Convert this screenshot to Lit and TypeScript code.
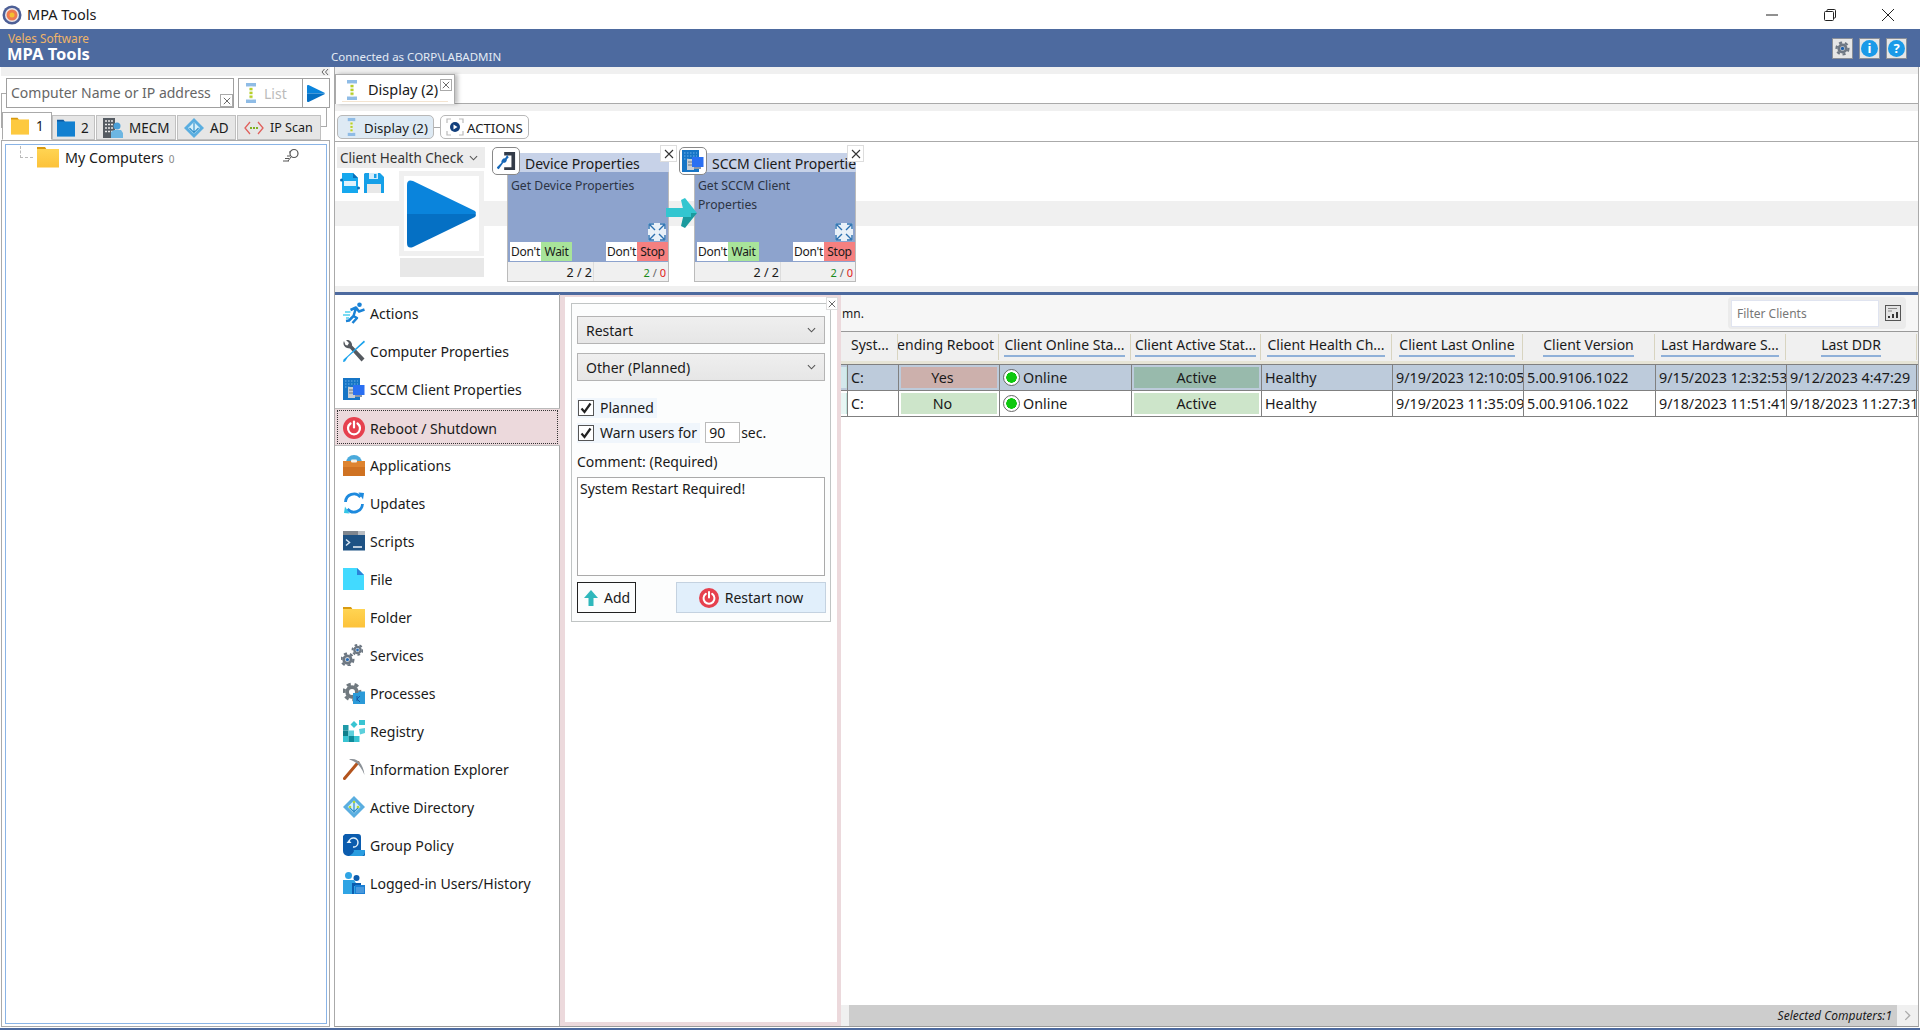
import { LitElement, html, svg, css } from 'lit';
import { customElement } from 'lit/decorators.js';

const gear = (cx: number, cy: number, r: number, fill: string, dot: string) => svg`
  <circle cx=${cx} cy=${cy} r=${r * 1.05} fill="none" stroke=${fill} stroke-width=${r * 0.4} stroke-dasharray=${`${r * 0.55} ${r * 0.5}`} />
  <circle cx=${cx} cy=${cy} r=${r * 0.65} fill="none" stroke=${fill} stroke-width=${r * 0.5} />
  <circle cx=${cx} cy=${cy} r=${r * 0.3} fill=${dot} />`;

const folderIcon = (tab: string, top: string, bottom: string, id: string) => html`<svg viewBox="0 0 22 22" class="ic22">
  <defs><linearGradient id=${id} x1="0" y1="0" x2="0" y2="1"><stop offset="0" stop-color=${top} /><stop offset="1" stop-color=${bottom} /></linearGradient></defs>
  <path d="M0 1h8l2 3h-10z" fill=${tab} />
  <rect x="0" y="3" width="22" height="18.500" fill=${`url(#${id})`} />
</svg>`;

const displayIcon = html`<svg viewBox="0 0 12 20" width="12" height="20" preserveAspectRatio="none">
  <rect x="1" y="0" width="10" height="3.500" fill="#8fbce6" />
  <rect x="1" y="16.500" width="10" height="3.500" fill="#8fbce6" />
  <rect x="4.500" y="3.500" width="3" height="13" fill="#eef3e0" />
  <rect x="4.500" y="5" width="3" height="2.200" fill="#b8d028" />
  <rect x="4.500" y="8.800" width="3" height="2.200" fill="#b8d028" />
  <rect x="4.500" y="12.600" width="3" height="2.200" fill="#b8d028" />
</svg>`;

const powerIcon = (s: number) => html`<svg viewBox="0 0 22 22" width=${s} height=${s}>
  <circle cx="11" cy="11" r="11" fill="#e6404e" />
  <path d="M7.500 6.500a6 6 0 1 0 7 0" fill="none" stroke="#fff" stroke-width="2.200" stroke-linecap="round" />
  <path d="M11 4.500v6" stroke="#fff" stroke-width="2.200" stroke-linecap="round" />
</svg>`;

const playTriangle = (w: number, h: number) => html`<svg viewBox="0 0 70 70" width=${w} height=${h}>
  <path d="M0 6Q0 0 6 2L68 32Q70 35 68 35H0z" fill="#0a84dc" />
  <path d="M0 35H68Q70 35 68 38L6 68Q0 70 0 64z" fill="#0570c4" />
</svg>`;

const adIcon = html`<svg viewBox="0 0 22 22" class="ic22">
  <path d="M11 0L22 11L11 22L0 11z" fill="#5aaee0" />
  <path d="M11 4.500L17.500 11L11 17.500L4.500 11z" fill="#d6f0fa" />
  <path d="M11 5v12M6 11l5 5 5-5" stroke="#2c8cc8" stroke-width="1.200" fill="none" />
  <circle cx="11" cy="6" r="1.300" fill="#b4d83a" /><circle cx="7" cy="11" r="1.300" fill="#b4d83a" /><circle cx="15" cy="11" r="1.300" fill="#b4d83a" />
</svg>`;

const sccmIcon = html`<svg viewBox="0 0 22 22" class="ic22">
  <rect x="0" y="0" width="17" height="22" fill="#1675c6" />
  <path d="M2 3h13M2 6h13M2 9h5" stroke="#6fb2e8" stroke-width="1.200" stroke-dasharray="1.500 1.500" />
  <rect x="5" y="9" width="7" height="11" fill="#c9ced4" />
  <path d="M6 12h5M6 15h5" stroke="#6d7680" stroke-width="1" />
  <rect x="10" y="7" width="11.500" height="10" fill="#2a6ff2" />
  <rect x="12" y="17" width="7" height="2" fill="#8a96a8" />
</svg>`;

const navIcons: Record<string, unknown> = {
  actions: html`<svg viewBox="0 0 22 22" class="ic22">
    <circle cx="16.500" cy="2.800" r="2.300" fill="#1a82d6" />
    <path d="M7.500 8L13 5.500L16 9.500L21.500 7.500M13 6L10.500 14L14 16L9.500 21M10.500 14L6 18.500L3 19" stroke="#1a82d6" stroke-width="2.500" fill="none" stroke-linejoin="round" />
    <path d="M2 10h5.500M0 13h7M3 16h3" stroke="#4fd0ee" stroke-width="1.300" />
  </svg>`,
  tools: html`<svg viewBox="0 0 22 22" class="ic22">
    <path d="M1 1a5 5 0 0 0 3 7l3 .5L18.500 21.500l3-3L9 5.500A5 5 0 0 0 3 0l3 3-1.500 2.500L2.500 5z" fill="#55595f" />
    <path d="M21 .5L22 2 5 17l-3 4.500-2 .5.500-2.500L4.500 16z" fill="#1ca3ec" />
  </svg>`,
  sccm: sccmIcon,
  power: powerIcon(22),
  apps: html`<svg viewBox="0 0 22 22" class="ic22">
    <path d="M3 9a8 8 0 0 1 16 0z" fill="#4aaadc" />
    <rect x="0" y="7" width="22" height="15" fill="#de8430" />
    <rect x="0" y="13" width="22" height="9" fill="#cf7222" />
    <rect x="8" y="5.500" width="6" height="3" rx="1" fill="#f7f2e8" />
  </svg>`,
  updates: html`<svg viewBox="0 0 22 22" class="ic22" fill="none">
    <path d="M2.500 10a8.500 8.500 0 0 1 15-5" stroke="#1d8ade" stroke-width="2.800" />
    <path d="M15.500 .5l5.500.5-1 6.500z" fill="#1d8ade" />
    <path d="M19.500 12a8.500 8.500 0 0 1-15 5" stroke="#1d8ade" stroke-width="2.800" />
    <path d="M6.500 21.500L1 21l1-6.500z" fill="#34c6e6" />
  </svg>`,
  scripts: html`<svg viewBox="0 0 22 22" class="ic22">
    <rect y="1" width="22" height="19.500" fill="#1e5284" />
    <rect y="1" width="22" height="4" fill="#80868e" />
    <rect x="15" y="1" width="7" height="4" fill="#b9bdc2" />
    <path d="M3 9.500l3.500 3-3.500 3" stroke="#d8e6f2" stroke-width="1.500" fill="none" />
    <path d="M10 17h9" stroke="#f2f5f8" stroke-width="1.500" />
  </svg>`,
  file: html`<svg viewBox="0 0 22 22" class="ic22">
    <path d="M0 0h14l7 7v15H0z" fill="#42daff" />
    <path d="M14 0l7 7h-7z" fill="#2b84d8" />
  </svg>`,
  folder: folderIcon('#d89a10', '#ffd452', '#fcc23a', 'fnav'),
  services: html`<svg viewBox="0 0 24 24" class="ic22 shift">
    ${gear(7, 17, 6.200, '#6d7782', '#2b6cb4')}${gear(18, 6.500, 5.200, '#6d7782', '#2b6cb4')}
  </svg>`,
  processes: html`<svg viewBox="0 0 22 22" class="ic22">
    ${gear(9, 10, 7.500, '#70797f', '#fff')}
    <path d="M10 11h5l1-1.500h6V22H10z" fill="#2b9ad8" />
    <path d="M14 14v5M17 14l-3 3 3 3" stroke="#1658a6" stroke-width="1" fill="none" />
  </svg>`,
  registry: html`<svg viewBox="0 0 22 22" class="ic22">
    <rect y="5" width="5.500" height="5.500" fill="#1f9aa8" />
    <rect y="10.500" width="5.500" height="5.500" fill="#0f7f8c" />
    <rect x="5.500" y="10.500" width="5.500" height="5.500" fill="#5cd0dc" />
    <rect y="16" width="5.500" height="6" fill="#38c4d2" />
    <rect x="5.500" y="16" width="5.500" height="6" fill="#0e8a9a" />
    <rect x="11" y="16" width="5.500" height="6" fill="#38c4d2" />
    <path d="M11 1l3.500 3.500L11 8 7.500 4.500z" fill="#38c4d2" />
    <rect x="16" y="0" width="6" height="5" fill="#38c4d2" />
    <path d="M16 9l6-1 0 5-5 1.500z" fill="#5cd0dc" />
  </svg>`,
  pick: html`<svg viewBox="0 0 22 22" class="ic22" fill="none">
    <path d="M1.500 20.500L15 4.500" stroke="#b3541e" stroke-width="3" stroke-linecap="round" />
    <path d="M6 1.500C13 -.5 20 4 21.500 17C18 8 13 3 6 1.500z" fill="#8c9298" />
  </svg>`,
  ad: adIcon,
  gp: html`<svg viewBox="0 0 22 22" class="ic22">
    <path d="M2 0h13a3 3 0 0 1 3 3v14h4a3 3 0 0 1-3 5H5a5 5 0 0 1-5-5V2z" fill="#0b5cae" />
    <path d="M9 20c3-3 2-4 1-4h12c0 3-1 6-3 6H6z" fill="#2a9de0" />
    <path d="M6 8a4.500 4.500 0 1 1 4 5" stroke="#e8f4fc" stroke-width="1.500" fill="none" />
    <path d="M3.500 9l2.500-3 2.500 3z" fill="#e8f4fc" />
  </svg>`,
  users: html`<svg viewBox="0 0 22 22" class="ic22">
    <circle cx="5.500" cy="3.500" r="3.500" fill="#2fa4e4" />
    <path d="M0 8h11l2 3v11H0z" fill="#2fa4e4" />
    <circle cx="13.500" cy="6" r="3" fill="#0b5cae" />
    <path d="M9 11h9v3h-7v8H9z" fill="#0b5cae" />
    <rect x="12" y="13" width="10" height="9" fill="#1b7fd4" />
    <path d="M13.500 16h7M13.500 18h7M13.500 20h7" stroke="#cfe6f8" stroke-width="1" stroke-dasharray="1 1" />
  </svg>`,
};

const navItems = [
  ['actions', 'Actions'],
  ['tools', 'Computer Properties'],
  ['sccm', 'SCCM Client Properties'],
  ['power', 'Reboot / Shutdown'],
  ['apps', 'Applications'],
  ['updates', 'Updates'],
  ['scripts', 'Scripts'],
  ['file', 'File'],
  ['folder', 'Folder'],
  ['services', 'Services'],
  ['processes', 'Processes'],
  ['registry', 'Registry'],
  ['pick', 'Information Explorer'],
  ['ad', 'Active Directory'],
  ['gp', 'Group Policy'],
  ['users', 'Logged-in Users/History'],
];

const columns = [
  { label: 'Syst...', w: 51, align: 'al-left', plain: true },
  { label: 'Pending Reboot', w: 101, align: 'al-right', plain: true },
  { label: 'Client Online Sta...', w: 132 },
  { label: 'Client Active Stat...', w: 130 },
  { label: 'Client Health Ch...', w: 131 },
  { label: 'Client Last Online', w: 131 },
  { label: 'Client Version', w: 132 },
  { label: 'Last Hardware S...', w: 131 },
  { label: 'Last DDR', w: 131 },
];

const rows = [
  { pending: 'Yes', last: '9/19/2023 12:10:05', hw: '9/15/2023 12:32:53', ddr: '9/12/2023 4:47:29', selected: true },
  { pending: 'No', last: '9/19/2023 11:35:09', hw: '9/18/2023 11:51:41', ddr: '9/18/2023 11:27:31', selected: false },
];

const chevron = html`<svg viewBox="0 0 10 6" width="9" height="6" fill="none"><path d="M1 1l4 4 4-4" stroke="#555" stroke-width="1.200" /></svg>`;
const closeX = html`<svg viewBox="0 0 10 10" width="8" height="8" fill="none"><path d="M1 1l8 8M9 1l-8 8" stroke="#444" stroke-width="1" /></svg>`;
const checkMark = html`<span class="check"><svg viewBox="0 0 14 14" width="14" height="14" fill="none"><path d="M2.500 7.500l3 3.500 6-8.500" stroke="#222" stroke-width="2.200" /></svg></span>`;

@customElement('app-root')
export class AppRoot extends LitElement {
  render() {
    return html`
      <div class="titlebar">
        <svg viewBox="0 0 20 20" width="20" height="20">
          <circle cx="10" cy="10" r="9.500" fill="#4d5f96" />
          <circle cx="10" cy="10" r="7" fill="#e8e4e8" />
          <circle cx="10" cy="10" r="5.500" fill="#ef7a50" />
          <circle cx="10" cy="10" r="2.500" fill="#f5c030" />
        </svg>
        <span class="app-title">MPA Tools</span>
        <div class="winbtns">
          <span class="winbtn"><svg viewBox="0 0 12 12" width="12" height="12"><path d="M0 6h12" stroke="#222" stroke-width="1" /></svg></span>
          <span class="winbtn"><svg viewBox="0 0 12 12" width="12" height="12" fill="none"><rect x=".5" y="2.500" width="9" height="9" rx="1" stroke="#222" /><path d="M3 2.500V1.500a1 1 0 0 1 1-1h6.500a1 1 0 0 1 1 1V8a1 1 0 0 1-1 1h-1" stroke="#222" /></svg></span>
          <span class="winbtn"><svg viewBox="0 0 12 12" width="12" height="12"><path d="M0 0l12 12M12 0l-12 12" stroke="#222" stroke-width="1" /></svg></span>
        </div>
      </div>

      <header class="header">
        <div class="brand">
          <div class="veles">Veles Software</div>
          <div class="brand-name">MPA Tools</div>
        </div>
        <div class="connected">Connected as CORP\\LABADMIN</div>
        <div class="head-btns">
          <span class="head-btn"><svg viewBox="0 0 18 18" width="17" height="17">${gear(9, 9, 6, '#6f7884', '#1f5fa8')}</svg></span>
          <span class="head-btn"><span class="round-i">i</span></span>
          <span class="head-btn"><span class="round-i">?</span></span>
        </div>
      </header>

      <div class="main">
        <aside class="left">
          <div class="strip-left">
            <svg viewBox="0 0 8 8" width="8" height="8" fill="none"><path d="M3.500 1L1 4l2.500 3M7 1L4.500 4 7 7" stroke="#666" stroke-width="1" /></svg>
          </div>
          <div class="search-row">
            <div class="search-input">
              <span class="placeholder">Computer Name or IP address</span>
              <span class="mini-x">${closeX}</span>
            </div>
            <div class="list-box">
              <span class="list-ic">${displayIcon}</span><span class="list-text">List</span>
            </div>
            <div class="go-box">${playTriangle(18, 19)}</div>
          </div>
          <div class="tabs">
            <div class="tab active">
              <svg viewBox="0 0 22 22" width="18" height="18"><path d="M0 1h8l2 3h-10z" fill="#d89a10" /><rect y="3" width="22" height="18.500" fill="#fdc93f" /></svg>
              <span>1</span>
            </div>
            <div class="tab t2">
              <svg viewBox="0 0 22 22" width="18" height="18"><path d="M0 1h8l2 3h-10z" fill="#0f5aa0" /><rect y="3" width="22" height="18.500" fill="#1280d0" /></svg>
              <span>2</span>
            </div>
            <div class="tab t3">
              <svg viewBox="0 0 20 20" width="20" height="20">
                <rect width="12" height="20" fill="#555b62" />
                <path d="M2 3h8M2 6.500h8M2 10h8M2 13.500h8" stroke="#e8e8e8" stroke-width="1.500" stroke-dasharray="2 1" />
                <circle cx="14" cy="8" r="3.500" fill="#4a9fd8" />
                <path d="M8 20v-6l3-2h7l2 3v5z" fill="#6cb6e2" />
              </svg>
              <span>MECM</span>
            </div>
            <div class="tab t4"><svg viewBox="0 0 22 22" width="20" height="20">
              <path d="M11 0L22 11L11 22L0 11z" fill="#5aaee0" />
              <path d="M11 4.500L17.500 11L11 17.500L4.500 11z" fill="#d6f0fa" />
              <path d="M11 5v12M6 11l5 5 5-5" stroke="#2c8cc8" stroke-width="1.200" fill="none" />
            </svg><span>AD</span></div>
            <div class="tab t5">
              <svg viewBox="0 0 20 14" width="20" height="14" fill="none">
                <path d="M6 1L1 7l5 6M14 1l5 6-5 6" stroke="#e0605c" stroke-width="1.300" />
                <path d="M6 7h8" stroke="#80b020" stroke-width="2" stroke-dasharray="2 1" />
              </svg>
              <span class="ip">IP Scan</span>
            </div>
          </div>
          <div class="tree-wrap">
            <div class="tree">
              <div class="tree-row">
                <span class="tree-dash"></span>
                ${folderIcon('#d89a10', '#ffd452', '#fcc23a', 'ftree')}
                <span class="tree-label">My Computers</span>
                <span class="tree-count">0</span>
                <svg class="tree-find" viewBox="0 0 18 14" width="18" height="14" fill="none">
                  <circle cx="12" cy="5.500" r="4" stroke="#555" stroke-width="1.200" />
                  <path d="M9 9l-3 4M1 13h6M3 10.500h4M5 8h3M7 4h1" stroke="#555" stroke-width="1" />
                </svg>
              </div>
            </div>
          </div>
        </aside>

        <section class="right">
          <div class="strip s7"></div>
          <div class="tabrow">
            <div class="doc-tab">
              ${displayIcon}
              <span class="doc-label">Display (2)</span>
              <span class="doc-x">${closeX}</span>
            </div>
          </div>
          <div class="strip s7"></div>
          <div class="subtabs">
            <div class="pill on">${displayIcon}<span>Display (2)</span></div>
            <div class="pill act">
              <svg viewBox="0 0 18 18" width="18" height="18" fill="none">
                <path d="M1 5V1h4M13 1h4v4M17 13v4h-4M5 17H1v-4" stroke="#bbb" stroke-width="1.200" />
                <circle cx="9" cy="9" r="5" fill="#123f7c" />
                <path d="M7.500 6.500v5l4-2.500z" fill="#fff" />
              </svg>
              <span>ACTIONS</span>
            </div>
          </div>

          <div class="workflow">
            <div class="band"></div>
            <div class="wf-left">
              <div class="combo"><span>Client Health Check</span>${chevron}</div>
              <div class="wf-tools">
                <div class="wf-icons">
                  <svg viewBox="0 0 20 20" width="20" height="20">
                    <path d="M2 0h11l5 5v15H2z" fill="#16a8ee" />
                    <path d="M13 0l5 5h-5z" fill="#0a70b8" />
                    <rect x="4" y="8" width="12" height="5" fill="#dff2fc" />
                    <circle cx="1.500" cy="7" r="1.500" fill="#0a70b8" /><circle cx="18.500" cy="15" r="1.500" fill="#0a70b8" />
                  </svg>
                  <svg viewBox="0 0 20 20" width="20" height="20">
                    <path d="M1 0h15l4 4v16H0V1z" fill="#16a0e8" />
                    <rect x="5" y="0" width="9" height="6" fill="#d4ecfa" />
                    <rect x="10" y="1" width="2.500" height="4" fill="#16a0e8" />
                    <rect x="3" y="11" width="14" height="9" fill="#e8e8e8" />
                  </svg>
                </div>
                <div class="play-col">
                  <div class="play-out"><div class="play-in">${playTriangle(70, 70)}</div></div>
                  <div class="play-bar"></div>
                </div>
              </div>
            </div>

            ${this.card('Device Properties', ['Get Device Properties'], html`<svg viewBox="0 0 22 22" width="20" height="20">
              <path d="M9 1h12v20H9v-3h8V5H9z" fill="#333b48" />
              <path d="M14 2l-1.500 3 1.500 2-2 2a4 4 0 0 1-4 4L3 20a2 2 0 0 1-2-2l5-5a4 4 0 0 1 4-5z" fill="#1768b8" />
            </svg>`)}
            <div class="wf-arrow">
              <svg viewBox="0 0 31 30" width="31" height="30">
                <path d="M15 2l4-2 12 15H18z" fill="#32c6d0" />
                <path d="M15 28l4 2 12-15H18z" fill="#1a9a9e" />
                <rect x="0" y="10" width="25" height="9" fill="#32c6d0" />
              </svg>
            </div>
            ${this.card('SCCM Client Properties', ['Get SCCM Client', 'Properties'], sccmIcon)}
          </div>

          <div class="strip s5"></div>
          <div class="blue-line"></div>

          <div class="lower">
            <nav class="nav">
              ${navItems.map(([icon, label]) => html`
                <div class="nav-item ${label === 'Reboot / Shutdown' ? 'current' : ''}">
                  ${navIcons[icon]}<span>${label}</span>
                </div>`)}
            </nav>

            <div class="form-outer">
              <span class="form-x">${closeX}</span>
              <div class="form">
                <div class="select"><span>Restart</span>${chevron}</div>
                <div class="select"><span>Other (Planned)</span>${chevron}</div>
                <div class="check-row first"><span class="check-lab">${checkMark}<span>Planned</span></span></div>
                <div class="check-row">
                  <span class="check-lab">${checkMark}<span>Warn users for</span></span>
                  <span class="num">90</span><span class="sec">sec.</span>
                </div>
                <div class="comment-label">Comment: (Required)</div>
                <div class="textarea">System Restart Required!</div>
                <div class="form-actions">
                  <div class="btn-add">
                    <svg viewBox="0 0 16 16" width="16" height="16"><path d="M8 0l7 8h-4.500v8h-5V8H1z" fill="#2fb8bc" /></svg>
                    <span>Add</span>
                  </div>
                  <div class="btn-restart">${powerIcon(20)}<span>Restart now</span></div>
                </div>
              </div>
            </div>

            <div class="grid-panel">
              <div class="grid-top">
                <span class="hint">mn.</span>
                <div class="filter">
                  <div class="filter-input">Filter Clients</div>
                  <svg viewBox="0 0 16 16" width="16" height="16">
                    <rect x=".5" y=".5" width="15" height="15" fill="#e4e4e4" stroke="#555" />
                    <path d="M3 3.500h9M3 6h4" stroke="#888" stroke-width="1" />
                    <path d="M4 11v2M8 9v4M12 7v6" stroke="#222" stroke-width="1.800" />
                  </svg>
                </div>
              </div>
              <div class="grid">
                <div class="grid-head">
                  <div class="corner"></div>
                  ${columns.map(
                    c => html`<div class="hcell ${c.align ?? ''}" style="width:${c.w}px">
                      <span class="${c.plain ? '' : 'lined'}">${c.label}</span>
                    </div>`,
                  )}
                </div>
                ${rows.map(r => html`
                  <div class="grid-row ${r.selected ? 'sel' : ''}">
                    <div class="rowhead"></div>
                    <div class="cell" style="width:${columns[0].w}px">C:</div>
                    <div class="cell boxed pend" style="width:${columns[1].w}px"><span class=${r.pending === 'Yes' ? 'tag-yes' : 'tag-ok'}>${r.pending}</span></div>
                    <div class="cell" style="width:${columns[2].w}px"><span class="radio"></span>Online</div>
                    <div class="cell boxed" style="width:${columns[3].w}px"><span class="tag-ok">Active</span></div>
                    <div class="cell" style="width:${columns[4].w}px">Healthy</div>
                    <div class="cell" style="width:${columns[5].w}px">${r.last}</div>
                    <div class="cell" style="width:${columns[6].w}px">5.00.9106.1022</div>
                    <div class="cell" style="width:${columns[7].w}px">${r.hw}</div>
                    <div class="cell" style="width:${columns[8].w}px">${r.ddr}</div>
                  </div>`)}
              </div>
              <div class="statusbar">
                <div class="status-left"></div>
                <div class="status-bar">Selected Computers:1</div>
                <div class="status-arrow"><svg viewBox="0 0 8 12" width="7" height="11" fill="none"><path d="M1.500 1l5 5-5 5" stroke="#aaa" stroke-width="1.500" /></svg></div>
              </div>
            </div>
          </div>
        </section>
      </div>
    `;
  }

  card(title: string, lines: string[], icon: unknown) {
    return html`
      <div class="card">
        <div class="card-icon">${icon}</div>
        <div class="card-x"><svg viewBox="0 0 10 10" width="10" height="10" fill="none"><path d="M1 1l8 8M9 1l-8 8" stroke="#333" stroke-width="1.100" /></svg></div>
        <div class="card-title">${title}</div>
        <div class="card-body">
          <div class="card-text">${lines.map(l => html`<div>${l}</div>`)}</div>
          <svg class="card-expand" viewBox="0 0 18 18" width="18" height="18" fill="none">
            <rect width="18" height="18" fill="#e8f0f8" />
            <path d="M1 6V1h5M12 1h5v5M17 12v5h-5M6 17H1v-5M2 2l5 5M16 2l-5 5M16 16l-5-5M2 16l5-5" stroke="#2c70b0" stroke-width="1.400" />
          </svg>
          <div class="card-toggles">
            <div class="toggle"><span class="t-off">Don't</span><span class="t-wait">Wait</span></div>
            <div class="toggle"><span class="t-off">Don't</span><span class="t-stop">Stop</span></div>
          </div>
        </div>
        <div class="card-foot">
          <div class="foot-a">2 / 2</div>
          <div class="foot-b"><span class="ok">2</span> / <span class="bad">0</span></div>
        </div>
      </div>`;
  }

  static styles = css`
    :host {
      display: flex;
      flex-direction: column;
      width: 1920px;
      height: 1030px;
      overflow: hidden;
      background: #fff;
      color: #1a1a1a;
      font-family: 'Noto Sans', 'Open Sans', sans-serif;
      font-size: 14px;
    }
    .ic22 {
      width: 22px;
      height: 22px;
      flex: none;
    }
    .shift {
      margin-left: -2px;
      margin-right: 2px;
    }

    .titlebar {
      height: 29px;
      display: flex;
      align-items: center;
      padding-left: 2px;
      flex: none;
    }
    .app-title {
      margin: -2px 0 0 5px;
      font-size: 14.500px;
    }
    .winbtns {
      margin-left: auto;
      display: flex;
      padding-right: 3px;
    }
    .winbtn {
      width: 58px;
      display: flex;
      justify-content: center;
    }

    .header {
      height: 38px;
      flex: none;
      background: #4d6a9f;
      display: flex;
      position: relative;
    }
    .brand {
      width: 331px;
      padding: 2px 0 0 7px;
      box-sizing: border-box;
    }
    .veles {
      color: #f0b468;
      font-size: 11.800px;
      line-height: 15px;
      padding-left: 1px;
    }
    .brand-name {
      color: #fff;
      font-weight: 700;
      font-size: 16.500px;
      line-height: 15px;
    }
    .connected {
      color: #e4eaf4;
      font-size: 11.500px;
      align-self: flex-end;
      line-height: 20px;
    }
    .head-btns {
      margin-left: auto;
      display: flex;
      gap: 6px;
      padding: 9px 13px 0 0;
    }
    .head-btn {
      width: 21px;
      height: 21px;
      box-sizing: border-box;
      background: #e6e6e6;
      border: 1px solid #8a8f98;
      display: flex;
      align-items: center;
      justify-content: center;
    }
    .round-i {
      width: 17px;
      height: 17px;
      border-radius: 50%;
      background: #1a9ae8;
      color: #fff;
      font-weight: 700;
      font-size: 13px;
      line-height: 17px;
      text-align: center;
    }

    .main {
      flex: 1;
      display: flex;
      min-height: 0;
      border-bottom: 2px solid #4d6a9f;
      padding-bottom: 1px;
    }

    .left {
      width: 334px;
      flex: none;
      display: flex;
      flex-direction: column;
    }
    .strip-left {
      height: 9px;
      margin-left: 1px;
      width: 329px;
      background: #f0f0f0;
      display: flex;
      justify-content: flex-end;
      align-items: center;
      padding-right: 1px;
      box-sizing: border-box;
    }
    .search-row {
      display: flex;
      margin: 2px 0 0 6px;
      height: 30px;
      flex: none;
      position: relative;
    }
    .search-row::before {
      content: '';
      position: absolute;
      left: -5px;
      top: 15px;
      width: 5px;
      height: 35px;
      box-sizing: border-box;
      border-top: 1px solid #aaa;
      border-left: 1px solid #aaa;
    }
    .search-row::after {
      content: '';
      position: absolute;
      left: 315px;
      top: 29px;
      width: 6px;
      height: 20px;
      box-sizing: border-box;
      border-right: 1px solid #aaa;
      border-bottom: 1px solid #aaa;
    }
    .search-input {
      width: 228px;
      box-sizing: border-box;
      border: 1px solid #a0a0a0;
      padding-left: 4px;
      color: #666;
      font-size: 14px;
      line-height: 28px;
      position: relative;
      white-space: nowrap;
      overflow: hidden;
    }
    .mini-x {
      position: absolute;
      right: 0;
      bottom: 0;
      width: 11px;
      height: 11px;
      border: 1px solid #aaa;
      display: flex;
      align-items: center;
      justify-content: center;
    }
    .list-box {
      width: 65px;
      margin-left: 4px;
      box-sizing: border-box;
      border: 1px solid #a0a0a0;
      display: flex;
      align-items: center;
      padding-left: 6px;
    }
    .list-ic {
      display: flex;
    }
    .list-text {
      margin-left: 7px;
      color: #bbb;
      font-size: 14px;
    }
    .go-box {
      width: 27px;
      box-sizing: border-box;
      border: 1px solid #a0a0a0;
      border-left: none;
      display: flex;
      align-items: center;
      justify-content: center;
    }
    .tabs {
      display: flex;
      height: 27px;
      margin: 5px 0 0 2px;
      flex: none;
      align-items: flex-end;
      position: relative;
      z-index: 1;
    }
    .tab {
      height: 25px;
      box-sizing: border-box;
      background: #e6e6e6;
      border: 1px solid #c0c0c0;
      display: flex;
      align-items: center;
      gap: 6px;
      font-size: 13.500px;
      padding-left: 6px;
      margin-right: 1px;
      flex: none;
    }
    .tab.active {
      width: 50px;
      height: 28px;
      margin-right: 0;
      padding-left: 8px;
      gap: 7px;
      background: #fff;
      border-color: #aaa;
      border-bottom-color: #fff;
    }
    .t2 {
      width: 43px;
      padding-left: 4px;
    }
    .t3 {
      width: 80px;
    }
    .t4 {
      width: 59px;
    }
    .t5 {
      width: 84px;
      margin-right: 0;
    }
    .ip {
      font-size: 12.500px;
    }
    .tree-wrap {
      flex: 1;
      margin-left: 1px;
      width: 329px;
      box-sizing: border-box;
      border: 1px solid #aaa;
      padding: 3px 2px 2px 3px;
      min-height: 0;
    }
    .tree {
      height: 100%;
      box-sizing: border-box;
      border: 1px solid #8ab4e6;
    }
    .tree-row {
      display: flex;
      align-items: center;
      height: 24px;
    }
    .tree-dash {
      width: 13px;
      height: 12px;
      margin: -10px 4px 0 14px;
      border-left: 1px dashed #bbb;
      border-bottom: 1px dashed #bbb;
      box-sizing: border-box;
    }
    .tree-label {
      margin-left: 6px;
      font-size: 14.300px;
    }
    .tree-count {
      margin: 3px 0 0 5px;
      font-size: 10px;
      color: #888;
    }
    .tree-find {
      margin: -4px 0 0 auto;
      margin-right: 26px;
    }

    .right {
      flex: 1;
      display: flex;
      flex-direction: column;
      min-width: 0;
      margin-right: 1px;
      border-right: 1px solid #aaa;
      border-left: 1px solid #aaa;
      border-bottom: 1px solid #999;
    }
    .strip {
      background: #f0f0f0;
      flex: none;
    }
    .s7 {
      height: 7px;
    }
    .s5 {
      height: 6px;
    }
    .tabrow {
      height: 30px;
      flex: none;
      box-sizing: border-box;
      border-bottom: 1px solid #aaa;
    }
    .doc-tab {
      width: 120px;
      height: 30px;
      box-sizing: border-box;
      border: 1px solid #aaa;
      border-bottom: none;
      box-shadow: 3px 0 4px rgba(0, 0, 0, 0.25);
      display: flex;
      align-items: center;
      padding-left: 10px;
      position: relative;
      background: #fff;
    }
    .doc-tab::after {
      content: '';
      position: absolute;
      left: 6px;
      right: 6px;
      bottom: 2px;
      height: 1px;
      background: #f4e4d0;
    }
    .doc-label {
      margin: -2px 0 0 10px;
      font-size: 14.500px;
    }
    .doc-x {
      position: absolute;
      top: 4px;
      right: 2px;
      width: 10px;
      height: 10px;
      border: 1px solid #aaa;
      display: flex;
      align-items: center;
      justify-content: center;
    }
    .subtabs {
      height: 31px;
      flex: none;
      box-sizing: border-box;
      border-bottom: 1px solid #aaa;
      display: flex;
      gap: 6px;
      padding: 4px 0 3px 2px;
    }
    .pill {
      height: 24px;
      box-sizing: border-box;
      border: 1px solid #b8b8b8;
      border-radius: 5px;
      display: flex;
      align-items: center;
      white-space: nowrap;
      font-size: 13.200px;
      position: relative;
    }
    .pill span {
      margin-top: 2px;
    }
    .pill.on {
      background: #deeaf4;
      width: 97px;
      padding-left: 9px;
      gap: 8px;
    }
    .pill.on svg {
      width: 9px;
      height: 18px;
    }
    .pill.act {
      width: 89px;
      padding-left: 5px;
      gap: 3px;
    }
    .pill.act::before {
      content: '';
      position: absolute;
      left: -7px;
      top: 11px;
      width: 6px;
      height: 1px;
      background: #aaa;
    }

    .workflow {
      position: relative;
      height: 144px;
      flex: none;
      display: flex;
      align-items: flex-start;
      padding: 5px 0 0 2px;
      box-sizing: border-box;
    }
    .band {
      position: absolute;
      left: 0;
      right: 0;
      top: 59px;
      height: 25px;
      background: #f0f0f0;
    }
    .wf-left {
      width: 148px;
      flex: none;
      position: relative;
    }
    .combo {
      height: 21px;
      background: #ececec;
      display: flex;
      align-items: center;
      justify-content: space-between;
      padding: 0 7px 0 3px;
      font-size: 13.500px;
      color: #333;
    }
    .wf-tools {
      display: flex;
      margin-top: 3px;
    }
    .wf-icons {
      display: flex;
      gap: 4px;
      padding: 2px 0 0 3px;
      width: 62px;
      height: 30px;
      box-sizing: border-box;
      background: #fff;
    }
    .play-out {
      width: 85px;
      height: 85px;
      box-sizing: border-box;
      background: #f0f0f0;
      padding: 5px;
    }
    .play-in {
      background: #fff;
      height: 75px;
      display: flex;
      justify-content: center;
      align-items: center;
    }
    .play-bar {
      height: 19px;
      margin: 2px 0 0 1px;
      background: #e8e8e8;
    }
    .card {
      width: 162px;
      margin: 6px 0 0 22px;
      position: relative;
      flex: none;
    }
    .wf-arrow + .card {
      margin-left: 0;
    }
    .card-icon {
      position: absolute;
      left: -15px;
      top: -6px;
      width: 28px;
      height: 28px;
      box-sizing: border-box;
      background: #fff;
      border: 1px solid #888;
      border-radius: 5px;
      display: flex;
      align-items: center;
      justify-content: center;
      z-index: 1;
    }
    .card-x {
      position: absolute;
      right: -8px;
      top: -8px;
      width: 17px;
      height: 17px;
      background: #fff;
      border: 1px solid #ddd;
      box-sizing: border-box;
      display: flex;
      align-items: center;
      justify-content: center;
      z-index: 1;
    }
    .card-title {
      height: 19px;
      background: #c7d2e8;
      padding-left: 18px;
      font-size: 14px;
      line-height: 22px;
      white-space: nowrap;
      overflow: hidden;
    }
    .card-body {
      height: 90px;
      box-sizing: border-box;
      background: #8da3cd;
      position: relative;
      padding: 4px 0 0 3px;
      border-left: 1px solid #bbb;
      border-right: 1px solid #bbb;
    }
    .card-text {
      font-size: 12.200px;
      line-height: 19px;
      color: #2c3444;
    }
    .card-expand {
      position: absolute;
      right: 2px;
      bottom: 21px;
    }
    .card-toggles {
      position: absolute;
      left: 2px;
      right: 0;
      bottom: 1px;
      display: flex;
      justify-content: space-between;
    }
    .toggle {
      display: flex;
      font-size: 12px;
      line-height: 19px;
      text-align: center;
    }
    .toggle span {
      width: 31px;
      letter-spacing: -0.3px;
    }
    .t-off {
      background: #fff;
    }
    .t-wait {
      background: #a8e49a;
    }
    .t-stop {
      background: #f58080;
    }
    .card-foot {
      height: 20px;
      display: flex;
      background: #f0f0f0;
      border: 1px solid #bbb;
      border-top: none;
      box-sizing: border-box;
    }
    .foot-a {
      width: 86px;
      text-align: right;
      padding: 2px 1px 0 0;
      box-sizing: border-box;
      font-size: 12.500px;
      border-right: 1px solid #ddd;
      line-height: 17px;
    }
    .foot-b {
      flex: 1;
      text-align: right;
      padding: 3px 2px 0 0;
      font-size: 11px;
      color: #666;
      line-height: 16px;
    }
    .ok {
      color: #1a8a1a;
    }
    .bad {
      color: #e02020;
    }
    .wf-arrow {
      width: 25px;
      margin-top: 51px;
      flex: none;
      position: relative;
      z-index: 2;
    }
    .wf-arrow svg {
      display: block;
      margin-left: -3px;
    }

    .blue-line {
      height: 3px;
      background: #4d6a9f;
      flex: none;
    }
    .lower {
      flex: 1;
      min-height: 0;
      display: flex;
    }
    .nav {
      width: 225px;
      flex: none;
      box-sizing: border-box;
      border-right: 1px solid #aaa;
      margin-top: -1px;
    }
    .nav-item {
      height: 38px;
      display: flex;
      align-items: center;
      gap: 5px;
      padding-left: 8px;
      font-size: 14.100px;
      box-sizing: border-box;
    }
    .nav-item.current {
      background: #ecd9dc;
      outline: 1px dotted #333;
      outline-offset: -3px;
      border-top: 1px solid #bbb;
      border-bottom: 1px solid #bbb;
      margin-right: -1px;
      padding-top: 2px;
    }
    .form-outer {
      width: 281px;
      flex: none;
      box-sizing: border-box;
      background: #fff;
      border-left: 5px solid #ecd9dc;
      border-right: 4px solid #ecd9dc;
      border-top: 2px solid #ecd9dc;
      border-bottom: 4px solid #ecd9dc;
      padding: 6px 6px 0 6px;
      position: relative;
    }
    .form-x {
      position: absolute;
      right: -1px;
      top: 0;
      width: 10px;
      height: 11px;
      background: #fff;
      border: 1px solid #ddd;
      display: flex;
      align-items: center;
      justify-content: center;
    }
    .form {
      height: 319px;
      box-sizing: border-box;
      border: 1px solid #c0c4c4;
      background: #fcfdfd;
      padding: 12px 5px 0 5px;
      display: flex;
      flex-direction: column;
    }
    .select {
      height: 28px;
      flex: none;
      box-sizing: border-box;
      border: 1px solid #b4b4b4;
      background: linear-gradient(#efefef, #e6e6e6);
      display: flex;
      align-items: center;
      justify-content: space-between;
      padding: 0 8px;
      margin-bottom: 9px;
      font-size: 14px;
    }
    .check-row {
      display: flex;
      align-items: center;
      height: 21px;
      margin-bottom: 4px;
      font-size: 14px;
      flex: none;
    }
    .check-row.first {
      margin-top: 7px;
    }
    .check-lab {
      display: flex;
      align-items: center;
      gap: 6px;
      background: #f0f6fc;
      height: 20px;
      padding-right: 3px;
      padding-left: 1px;
    }
    .check {
      width: 14px;
      height: 14px;
      border: 1px solid #555;
      background: #fff;
      display: flex;
      align-items: center;
      justify-content: center;
    }
    .num {
      width: 35px;
      height: 21px;
      box-sizing: border-box;
      border: 1px solid #bbb;
      background: #fff;
      margin-left: 5px;
      padding-left: 3px;
      line-height: 20px;
    }
    .sec {
      margin-left: 1px;
    }
    .comment-label {
      margin-top: 5px;
      font-size: 14px;
      line-height: 20px;
      flex: none;
    }
    .textarea {
      height: 99px;
      flex: none;
      margin-top: 5px;
      box-sizing: border-box;
      border: 1px solid #aaa;
      background: #fff;
      padding: 1px 2px 0;
      line-height: 20px;
      font-size: 14px;
    }
    .form-actions {
      display: flex;
      justify-content: space-between;
      margin: 6px -1px 0 0;
    }
    .btn-add {
      width: 59px;
      height: 31px;
      box-sizing: border-box;
      border: 1px solid #222;
      display: flex;
      align-items: center;
      gap: 5px;
      padding-left: 5px;
      font-size: 14px;
    }
    .btn-restart {
      width: 150px;
      height: 31px;
      box-sizing: border-box;
      background: #e1effb;
      border: 1px solid #c4d2e0;
      display: flex;
      align-items: center;
      justify-content: center;
      gap: 6px;
      font-size: 14px;
    }

    .grid-panel {
      flex: 1;
      min-width: 0;
      display: flex;
      flex-direction: column;
      font-size: 14px;
    }
    .grid-top {
      height: 37px;
      flex: none;
      box-sizing: border-box;
      background: #f6f6f6;
      border-bottom: 1px solid #999;
      display: flex;
      align-items: center;
      justify-content: space-between;
      padding-left: 1px;
    }
    .hint {
      font-size: 12px;
    }
    .filter {
      display: flex;
      align-items: center;
      gap: 6px;
      height: 32px;
      margin-right: 12px;
      padding: 0 5px 0 3px;
      background: #ebebeb;
      border-radius: 4px;
    }
    .filter-input {
      width: 148px;
      height: 27px;
      box-sizing: border-box;
      background: #fff;
      border: 1px solid #e0e4f0;
      color: #777;
      font-size: 12px;
      line-height: 25px;
      padding-left: 5px;
    }
    .grid {
      flex: 1;
      min-height: 0;
    }
    .grid-head {
      height: 32px;
      box-sizing: border-box;
      display: flex;
      background: #f0f0f0;
      border-bottom: 3px solid #e6e4d6;
    }
    .corner {
      width: 6px;
      flex: none;
    }
    .hcell {
      box-sizing: border-box;
      flex: none;
      display: flex;
      justify-content: center;
      height: 26px;
      margin-top: 2px;
      border-right: 1px solid #d8d4c0;
      white-space: nowrap;
      overflow: hidden;
      line-height: 21px;
      font-size: 14px;
    }
    .hcell.al-left {
      justify-content: flex-start;
      padding-left: 4px;
    }
    .hcell.al-right {
      justify-content: flex-end;
      padding-right: 4px;
    }
    .hcell span {
      flex: none;
    }
    .lined {
      border-bottom: 2px solid #8fb0d8;
      height: 21px;
    }
    .grid-row {
      height: 26px;
      box-sizing: border-box;
      display: flex;
      border-bottom: 1px solid #808080;
    }
    .grid-row.sel {
      background: #bdcbdb;
      border-top: 1px solid #808080;
      height: 27px;
    }
    .rowhead {
      width: 6px;
      flex: none;
      background: #e8f6f4;
      box-sizing: border-box;
      margin: 2px 0;
      border-right: 1px solid #bfe4dc;
    }
    .sel .rowhead {
      background: #d4e8ec;
    }
    .cell {
      box-sizing: border-box;
      flex: none;
      border-left: 1px solid #808080;
      padding-left: 3px;
      white-space: nowrap;
      overflow: hidden;
      display: flex;
      align-items: center;
      font-size: 14.300px;
    }
    .cell:last-child {
      border-right: 1px solid #808080;
    }
    .cell.boxed {
      padding: 2px;
    }
    .pend span {
      padding-right: 13px;
    }
    .tag-yes,
    .tag-ok {
      flex: 1;
      height: 100%;
      text-align: center;
      line-height: 21px;
    }
    .tag-yes {
      background: #ccb0ac;
    }
    .tag-ok {
      background: #cde5ca;
    }
    .sel .tag-ok {
      background: #98baac;
    }
    .radio {
      width: 17px;
      height: 17px;
      box-sizing: border-box;
      flex: none;
      border-radius: 50%;
      background: radial-gradient(circle, #0fc80f 0 5px, #fff 5.500px);
      border: 1px solid #666;
      margin-right: 3px;
    }
    .statusbar {
      height: 21px;
      flex: none;
      display: flex;
    }
    .status-left {
      width: 8px;
      background: #f0f0f0;
    }
    .status-bar {
      flex: 1;
      background: #cdcdcd;
      text-align: right;
      font-style: italic;
      font-size: 12px;
      line-height: 22px;
      padding-right: 5px;
    }
    .status-arrow {
      width: 21px;
      background: #f0f0f0;
      display: flex;
      align-items: center;
      justify-content: center;
    }
  `;
}
